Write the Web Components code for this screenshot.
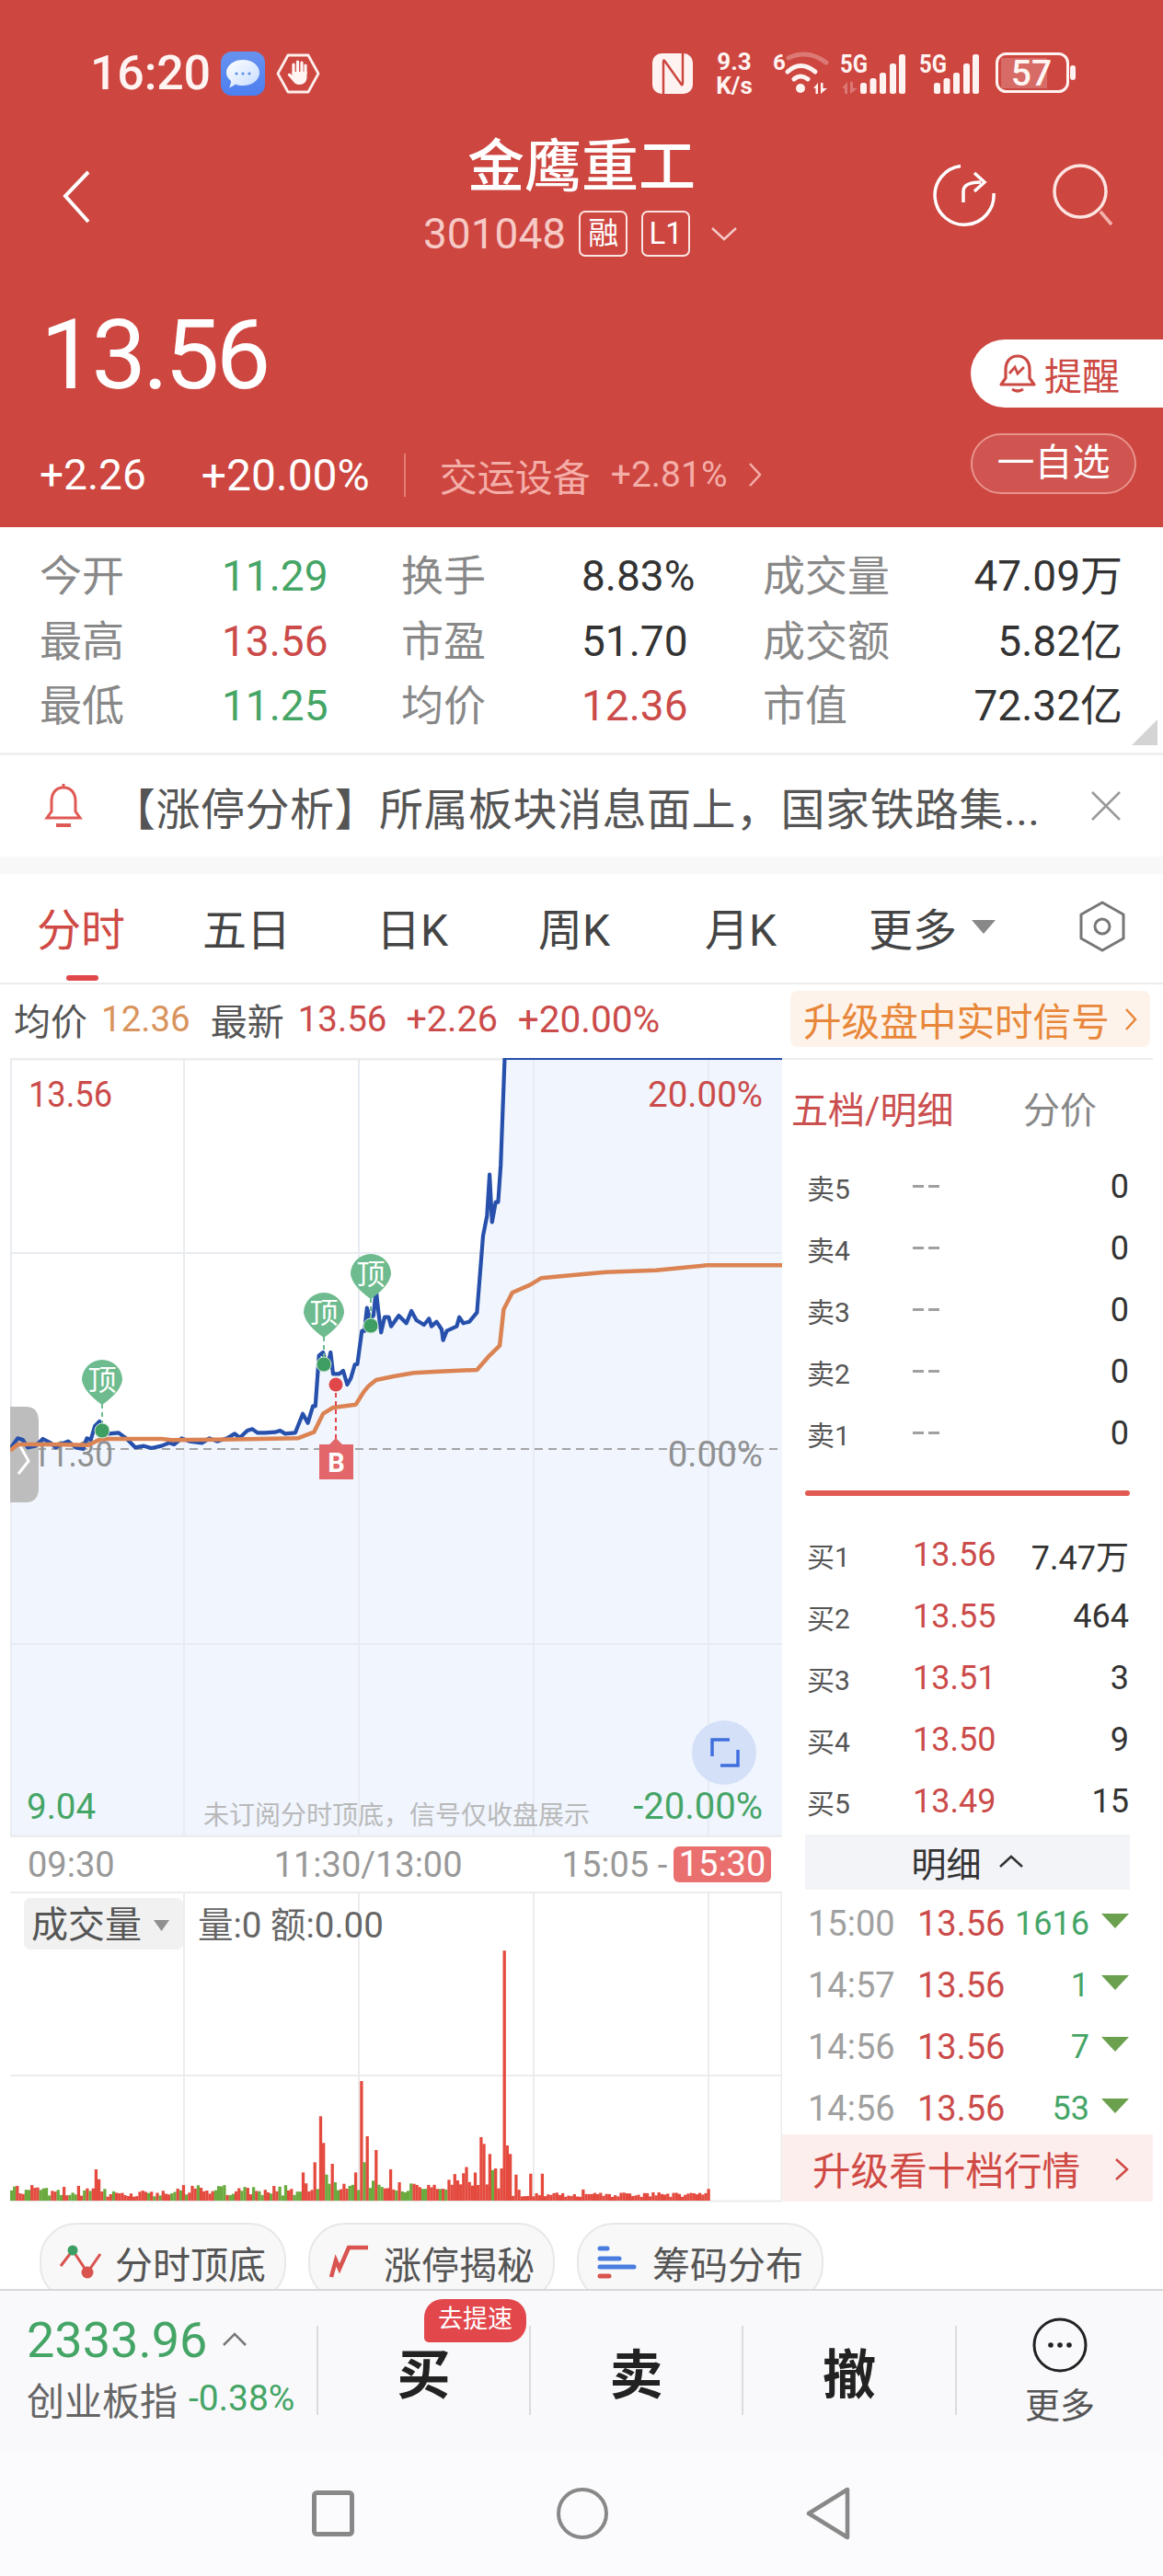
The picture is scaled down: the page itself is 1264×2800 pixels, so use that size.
<!DOCTYPE html>
<html lang="zh">
<head>
<meta charset="utf-8">
<title>金鹰重工</title>
<style>
  html, body { margin: 0; padding: 0; background: #fff; }
  body { width: 1264px; height: 2800px; overflow: hidden; font-family: Roboto, "Noto Sans CJK SC", sans-serif; color: #333; }
</style>
</head>
<body>
<stock-header></stock-header>
<quote-grid></quote-grid>
<news-bar>【涨停分析】所属板块消息面上，国家铁路集...</news-bar>
<chart-tabs></chart-tabs>
<info-row></info-row>
<chart-panel>
  <div slot="left"><time-chart></time-chart><time-axis></time-axis><volume-chart></volume-chart></div>
  <order-book slot="right"></order-book>
</chart-panel>
<chip-row>
  <chip-button>
    <svg slot="icon" width="46" height="38" viewBox="65 2442 46 38"><path d="M66 2465L79 2448L95 2472L109 2452" fill="none" stroke="#d9534f" stroke-width="3"/><circle cx="79" cy="2448" r="5.5" fill="#3d9e63"/><circle cx="95" cy="2472" r="6.5" fill="#d9534f"/></svg>
    分时顶底
  </chip-button>
  <chip-button>
    <svg slot="icon" width="46" height="38" viewBox="360 2442 46 38"><path d="M363 2477L368 2459L372 2468L382 2445H403" fill="none" stroke="#d9534f" stroke-width="4.5"/></svg>
    涨停揭秘
  </chip-button>
  <chip-button>
    <svg slot="icon" width="46" height="38" viewBox="652 2442 46 38"><g fill="none" stroke-width="5" stroke-linecap="round"><path d="M655 2446H663" stroke="#4a7de0"/><path d="M655 2457H676" stroke="#4a7de0"/><path d="M655 2466H692" stroke="#4a7de0"/><path d="M655 2476H665" stroke="#d9534f"/></g></svg>
    筹码分布
  </chip-button>
</chip-row>
<trade-bar></trade-bar>
<nav-keys></nav-keys>

<script>
const BG_RED = '#cd4640';
const RED = '#cb4b4a';
const GREEN = '#45a566';

class StockHeader extends HTMLElement {
  constructor() {
    super();
    this.attachShadow({ mode: 'open' });
    const bars = (x0) => [[0, 12], [10.5, 17], [21, 23], [32, 33], [42, 43]]
      .map(([x, h]) => `<rect x="${x0 + x}" y="${46 - h}" width="7" height="${h}" rx="2.5" fill="#fff3f1"/>`).join('');
    this.shadowRoot.innerHTML = `
      <style>
        :host { display: block; height: 573px; background: ${BG_RED}; color: #fff; overflow: hidden; }
        svg { display: block; flex: none; overflow: visible; }
        .status { display: flex; justify-content: space-between; padding: 55px 94px 0 98px; height: 50px; }
        .left, .right { display: flex; align-items: center; height: 50px; }
        .time { font-size: 52px; font-weight: 500; width: 130px; line-height: 50px; color: #fff4f2; letter-spacing: -.2px; }
        .speed { margin: 0 19px 0 22px; width: 46px; text-align: center; font-weight: 700; color: #fff4f2; }
        .speed div { font-size: 26px; line-height: 26px; }
        .nav { display: grid; grid-template-columns: 1fr 360px 1fr; height: 132px; margin-top: 45px; }
        .back { padding: 35px 0 0 66px; }
        .title { text-align: center; }
        .name { font-size: 62px; line-height: 64px; font-weight: 500; height: 64px; }
        .code { display: flex; justify-content: flex-start; align-items: center; height: 56px; margin-top: 12px; padding-left: 8px; font-size: 46px; color: #f6c9c5; }
        .tag { box-sizing: border-box; width: 53px; height: 50px; line-height: 45px; border: 2px solid #fbe4e1; border-radius: 7px; font-size: 33px; color: #fff; text-align: center; margin-left: 14px; }
        .tag + .tag { margin-left: 15px; }
        .acts { display: flex; padding: 26px 0 0 200px; }
        .quote { display: flex; justify-content: space-between; margin-top: 58px; }
        .price { font-size: 106px; line-height: 92px; height: 92px; padding-left: 44px; letter-spacing: -4px; }
        .chg { display: flex; align-items: center; height: 56px; margin-top: 56px; padding-left: 43px; font-size: 46px; }
        .chg .pct { margin-left: 60px; font-size: 48px; }
        .chg .sep { width: 2px; height: 47px; background: #e47e77; margin: 0 37px 0 37px; }
        .chg .sec { font-size: 41px; color: #f4aea8; width: 186px; }
        .chg .sp { font-size: 39px; color: #f4aea8; width: 149px; }
        .side { width: 209px; padding-top: 29px; }
        .remind { display: flex; align-items: center; height: 74px; background: #fff; border-radius: 37px 0 0 37px; padding-left: 31px; color: #cc4a44; font-size: 41px; box-sizing: border-box; }
        .remind span { margin-left: 9px; }
        .fav { box-sizing: border-box; width: 180px; height: 66px; line-height: 60px; margin-top: 28px; border: 2px solid #ea938d; background: rgba(255,255,255,.08); border-radius: 33px; text-align: center; font-size: 41px; }
      </style>
      <div class="status">
        <div class="left">
          <span class="time">16:20</span>
          <svg width="48" height="48" viewBox="0 0 48 48" style="margin-left:12px">
            <defs><linearGradient id="b" x1="0" y1="0" x2="0" y2="1"><stop offset="0" stop-color="#6792ef"/><stop offset="1" stop-color="#4c7ff0"/></linearGradient>
            <linearGradient id="w" x1="0" y1="0" x2="1" y2="1"><stop offset="0" stop-color="#fff"/><stop offset="1" stop-color="#c6dcff"/></linearGradient></defs>
            <rect width="48" height="48" rx="12" fill="url(#b)"/>
            <path d="M24 9C34 9 42 15 42 23C42 31 34 37 24 37C21 37 18 36.500 16 35.500C14 37 11 39 9 39C10.500 37 11 34 11 32C8 29.500 6 26.500 6 23C6 15 14 9 24 9Z" fill="url(#w)"/>
            <circle cx="17" cy="24" r="1.600" fill="#5f8de8"/><circle cx="24" cy="24" r="1.600" fill="#5f8de8"/><circle cx="31" cy="24" r="1.600" fill="#5f8de8"/>
          </svg>
          <svg width="48" height="44" viewBox="0 0 48 44" style="margin-left:12px">
            <path d="M13 2H35L46 22L35 42H13L2 22Z" fill="none" stroke="#fdeeec" stroke-width="2.800" stroke-linejoin="round"/>
            <g fill="none" stroke="#fff6f4" stroke-width="3.200" stroke-linecap="round"><path d="M19 22V12M23.500 21V9M28 21V10M32 22V13"/></g>
            <path d="M17.500 20H33.500V26C33.500 31 30 34 25.500 34C21 34 19.500 31.500 17.500 29L13 24C12 22.500 14 21 15.500 22L17.500 24Z" fill="#fff6f4"/>
          </svg>
        </div>
        <div class="right">
          <svg width="44" height="44" viewBox="0 0 44 44">
            <rect width="44" height="44" rx="10" fill="#fff3f1"/>
            <path d="M12 44V9Q12 6 14 9L31 33Q33 36 33 32V0" fill="none" stroke="${BG_RED}" stroke-width="2.500"/>
          </svg>
          <div class="speed"><div>9.3</div><div>K/s</div></div>
          <svg width="64" height="48" viewBox="0 0 64 48" style="margin-top:-2px">
            <text x="0" y="21" font-size="24" font-weight="700" fill="#fff3f1">6</text>
            <g fill="none" stroke="#fff3f1" stroke-width="5" stroke-linecap="round">
              <path d="M17 8Q38 -2 58 13" opacity=".3"/>
              <path d="M16 23Q30 10 46 23"/>
              <path d="M23 31Q30 25 38 31"/>
            </g>
            <circle cx="30" cy="41" r="5" fill="#fff3f1"/>
            <path d="M44 41L49 35V47H46.500V41ZM52 35H54.500V41H59L52 47Z" fill="#fff3f1"/>
          </svg>
          <svg width="72" height="48" viewBox="0 0 72 48" style="margin-left:9px">
            <text x="0" y="23" font-size="27" font-weight="700" fill="#fff3f1" textLength="30" lengthAdjust="spacingAndGlyphs">5G</text>
            ${bars(22)}
            <path d="M2 40L8 33V46H5V40ZM11 33H14V40H19L11 46Z" fill="#fff3f1" opacity=".3"/>
          </svg>
          <svg width="68" height="48" viewBox="0 0 68 48" style="margin-left:14px">
            <text x="0" y="23" font-size="27" font-weight="700" fill="#fff3f1" textLength="30" lengthAdjust="spacingAndGlyphs">5G</text>
            ${bars(16)}
          </svg>
          <svg width="88" height="46" viewBox="0 0 88 46" style="margin-left:15px">
            <rect x="1.500" y="1.500" width="77" height="41" rx="10" fill="none" stroke="#fff3f1" stroke-width="3"/>
            <path d="M6 6H56V39H6Z" fill="#fff" opacity=".2"/>
            <rect x="81" y="14" width="6" height="16" rx="3" fill="#fff3f1"/>
            <text x="39" y="36" text-anchor="middle" font-size="39" font-weight="500" fill="#fff6f4">57</text>
          </svg>
        </div>
      </div>
      <div class="nav">
        <div class="back"><svg width="34" height="58" viewBox="0 0 34 58"><path d="M30 2L5 28L30 56" fill="none" stroke="#fff" stroke-width="4"/></svg></div>
        <div class="title">
          <div class="name">金鹰重工</div>
          <div class="code"><span>301048</span><span class="tag">融</span><span class="tag">L1</span>
            <svg width="30" height="16" viewBox="0 0 30 16" style="margin-left:22px"><path d="M2 2L15 14L28 2" fill="none" stroke="#f6c9c5" stroke-width="2.500"/></svg>
          </div>
        </div>
        <div class="acts">
          <svg width="72" height="72" viewBox="0 0 72 72">
            <path d="M32 4.500A32 32 0 1 0 68 34" fill="none" stroke="#fff" stroke-width="3.500"/>
            <path d="M35 44V32Q35 22 54 22" fill="none" stroke="#fff" stroke-width="3.500"/>
            <path d="M47 12L58 22L47 32" fill="none" stroke="#fff" stroke-width="3.500"/>
          </svg>
          <svg width="72" height="72" viewBox="0 0 72 72" style="margin-left:59px">
            <circle cx="31" cy="32" r="28" fill="none" stroke="#fde3e0" stroke-width="3.500"/>
            <path d="M53 54L65 68" stroke="#f4b2ad" stroke-width="3.500"/>
          </svg>
        </div>
      </div>
      <div class="quote">
        <div>
          <div class="price">13.56</div>
          <div class="chg">
            <span>+2.26</span><span class="pct">+20.00%</span><span class="sep"></span>
            <span class="sec">交运设备</span><span class="sp">+2.81%</span>
            <svg width="16" height="28" viewBox="0 0 16 28"><path d="M2 2L13 14L2 26" fill="none" stroke="#f4aea8" stroke-width="2.500"/></svg>
          </div>
        </div>
        <div class="side">
          <div class="remind">
            <svg width="40" height="42" viewBox="0 0 40 42">
              <path d="M20 2C11 2 7 9 7 17V26L2 33H38L33 26V17C33 9 29 2 20 2Z" fill="none" stroke="#cc4a44" stroke-width="3.200" stroke-linejoin="round"/>
              <path d="M11 21L17 14L20 21L27 14" fill="none" stroke="#cc4a44" stroke-width="2.800"/>
              <path d="M14 38Q20 42 26 38" fill="none" stroke="#cc4a44" stroke-width="3.200"/>
            </svg>
            <span>提醒</span>
          </div>
          <div class="fav">一自选</div>
        </div>
      </div>`;
  }
}
customElements.define('stock-header', StockHeader);

class QuoteGrid extends HTMLElement {
  constructor() {
    super();
    this.attachShadow({ mode: 'open' });
    const cells = [
      ['今开', '11.29', 'g'], ['换手', '8.83%', ''], ['成交量', '47.09万', ''],
      ['最高', '13.56', 'r'], ['市盈', '51.70', ''], ['成交额', '5.82亿', ''],
      ['最低', '11.25', 'g'], ['均价', '12.36', 'r'], ['市值', '72.32亿', '']
    ];
    const html = cells.map(([k, v, c], i) =>
      `<span class="k">${k}</span><span class="v ${c} ${i % 3 === 2 ? 'end' : ''}">${v}</span>`).join('');
    this.shadowRoot.innerHTML = `
      <style>
        :host { display: block; position: relative; height: 245px; border-bottom: 3px solid #efefef; }
        .grid { display: grid; grid-template-columns: 198px 195px 196px 197px 150px 1fr; padding: 18px 44px 0 43px; grid-auto-rows: 70.500px; align-items: center; }
        .k { font-size: 46px; color: #888; line-height: 60px; }
        .v { font-size: 46px; color: #333; line-height: 60px; }
        .g { color: ${GREEN}; } .r { color: ${RED}; }
        .end { text-align: right; }
        .corner { position: absolute; right: 6px; bottom: 8px; width: 0; height: 0; border-left: 28px solid transparent; border-bottom: 28px solid #d4d4d4; }
      </style>
      <div class="grid">${html}</div><div class="corner"></div>`;
  }
}
customElements.define('quote-grid', QuoteGrid);

class NewsBar extends HTMLElement {
  constructor() {
    super();
    this.attachShadow({ mode: 'open' });
    this.shadowRoot.innerHTML = `
      <style>
        :host { display: block; border-bottom: 19px solid #f8f8f8; }
        .row { display: flex; align-items: center; height: 110px; padding-left: 48px; font-size: 48px; color: #555; position: relative; }
        .msg { margin-left: 31px; width: 1050px; white-space: nowrap; letter-spacing: .5px; }
        svg { display: block; flex: none; }
        .x { position: absolute; left: 1185px; top: 39px; }
      </style>
      <div class="row">
        <svg width="42" height="50" viewBox="0 0 42 50">
          <path d="M21 5C12 5 8 12 8 20V31L3 38H39L34 31V20C34 12 30 5 21 5Z" fill="none" stroke="#e05a55" stroke-width="3"/>
          <path d="M21 1V5" stroke="#e05a55" stroke-width="3"/>
          <path d="M13 46H29" stroke="#e05a55" stroke-width="4"/>
        </svg>
        <span class="msg"><slot></slot></span>
        <svg class="x" width="34" height="32" viewBox="0 0 34 32"><path d="M2 1L32 31M32 1L2 31" stroke="#999" stroke-width="2.500"/></svg>
      </div>`;
  }
}
customElements.define('news-bar', NewsBar);

class ChartTabs extends HTMLElement {
  constructor() {
    super();
    this.attachShadow({ mode: 'open' });
    const tabs = [['分时', 180], ['五日', 189], ['日K', 176], ['周K', 181], ['月K', 178]];
    this.shadowRoot.innerHTML = `
      <style>
        :host { display: block; height: 118px; border-bottom: 2px solid #ececec; font-size: 48px; color: #444; }
        .row { display: flex; align-items: center; height: 118px; padding: 0 0 4px 40px; box-sizing: border-box; position: relative; }
        .on { color: #cf4a44; }
        .ind { position: absolute; left: 72px; top: 110px; width: 35px; height: 6px; border-radius: 3px; background: #e0474a; }
        .tri { width: 0; height: 0; border: 13px solid transparent; border-top: 15px solid #888; border-bottom: 0; margin-left: 16px; }
        svg { margin-left: 90px; }
      </style>
      <div class="row">
        ${tabs.map(([t, w], i) => `<span class="${i ? '' : 'on'}" style="width:${w}px">${t}</span>`).join('')}
        <span>更多</span><span class="tri"></span>
        <svg width="52" height="56" viewBox="0 0 52 56"><path d="M26 2L49 15V41L26 54L3 41V15Z" fill="none" stroke="#777" stroke-width="3" stroke-linejoin="round"/><circle cx="26" cy="28" r="8" fill="none" stroke="#777" stroke-width="3"/></svg>
        <span class="ind"></span>
      </div>`;
  }
}
customElements.define('chart-tabs', ChartTabs);

class InfoRow extends HTMLElement {
  constructor() {
    super();
    this.attachShadow({ mode: 'open' });
    this.shadowRoot.innerHTML = `
      <style>
        :host { display: block; height: 80px; }
        .row { display: flex; align-items: center; height: 78px; padding: 0 0 3px 15px; box-sizing: border-box; font-size: 38.500px; color: ${RED}; }
        .k { font-size: 40px; color: #555; }
        .o { color: #d9935c; }
        .pill { display: flex; align-items: center; margin-left: auto; margin-right: 14px; width: 391px; height: 61px; box-sizing: border-box; padding-left: 14px; background: #fdf3ea; border-radius: 8px; color: #e8873a; font-size: 41.600px; }
        .pill svg { margin-left: 16px; }
      </style>
      <div class="row">
        <span class="k">均价</span><span class="o" style="margin-left:15px">12.36</span>
        <span class="k" style="margin-left:22px">最新</span><span style="margin-left:15px">13.56</span>
        <span style="margin-left:21px;font-size:39.500px">+2.26</span><span style="margin-left:22px;font-size:40.500px">+20.00%</span>
        <span class="pill">升级盘中实时信号<svg width="14" height="26" viewBox="0 0 14 26"><path d="M2 2L12 13L2 24" fill="none" stroke="#e8873a" stroke-width="2.500"/></svg></span>
      </div>`;
  }
}
customElements.define('info-row', InfoRow);

class ChartPanel extends HTMLElement {
  constructor() {
    super();
    this.attachShadow({ mode: 'open' });
    this.shadowRoot.innerHTML = `
      <style>
        :host { display: grid; grid-template-columns: 850px 403px; height: 1244px; }
      </style>
      <slot name="left"></slot><slot name="right"></slot>`;
  }
}
customElements.define('chart-panel', ChartPanel);

// coordinates below were read off the zoomed crop: x is scaled 1.823, y is 3x with offset 1140
const zx = (x) => +(x / 1.823).toFixed(1);
const zy = (y) => y / 3 + 1140;
const toLine = (pts) => pts.map(([x, y]) => `${zx(x)},${zy(y)}`).join(' ');

const PRICE = [[20,1305],[35,1270],[45,1275],[55,1300],[70,1295],[85,1272],[100,1285],[110,1300],[120,1290],[135,1280],[150,1300],[165,1305],[172,1270],[180,1275],[188,1230],[197,1215],[205,1250],[215,1255],[235,1252],[250,1270],[268,1300],[285,1295],[300,1302],[320,1295],[335,1285],[345,1290],[360,1270],[375,1280],[400,1285],[415,1270],[430,1280],[450,1270],[465,1255],[475,1268],[490,1245],[500,1240],[510,1252],[525,1252],[545,1250],[555,1245],[565,1255],[585,1252],[600,1190],[610,1220],[620,1165],[625,1165],[632,1000],[640,990],[648,1040],[655,990],[660,1060],[672,1060],[680,1050],[688,1095],[695,1075],[703,1030],[708,1028],[717,920],[722,920],[727,845],[733,880],[740,870],[745,785],[750,860],[755,925],[762,875],[770,875],[775,905],[790,870],[805,895],[815,855],[825,885],[840,900],[850,880],[855,905],[865,890],[875,915],[878,950],[885,920],[905,905],[910,875],[918,895],[930,890],[945,860],[957,610],[965,545],[970,410],[975,565],[982,500],[987,500],[992,380],[1000,30],[1550,30]];
const AVG = [[20,1310],[35,1290],[100,1290],[175,1292],[200,1272],[320,1272],[340,1276],[490,1273],[590,1270],[622,1250],[640,1190],[660,1170],[705,1160],[720,1120],[730,1100],[745,1080],[780,1068],[820,1057],[870,1052],[945,1047],[970,1000],[990,968],[998,850],[1015,795],[1050,770],[1072,748],[1120,740],[1200,728],[1300,722],[1400,706],[1550,706]];
const GRID_X = [200, 390, 580, 770];

class TimeChart extends HTMLElement {
  constructor() {
    super();
    this.attachShadow({ mode: 'open' });
    const pin = (cx, cy, dy) => `
      <path d="M${cx} ${cy + 26}V${dy}" stroke="#6dbb8e" stroke-width="2" stroke-dasharray="5 4"/>
      <path d="M${cx - 22} ${cy}A22 22 0 1 1 ${cx + 22} ${cy}Q${cx + 20} ${cy + 13} ${cx} ${cy + 27}Q${cx - 20} ${cy + 13} ${cx - 22} ${cy}Z" fill="#6dbb8e"/>
      <text x="${cx}" y="${cy + 11}" text-anchor="middle" font-size="31" fill="#fff">顶</text>
      <circle cx="${cx}" cy="${dy}" r="8" fill="#3f9e62" stroke="#cfe6d8" stroke-width="1"/>`;
    this.shadowRoot.innerHTML = `
      <style>
        :host { display: block; padding-left: 11px; height: 847px; }
        svg { display: block; }
      </style>
      <svg width="839" height="847" viewBox="11 1150 839 847">
        <rect x="11" y="1150" width="839" height="847" fill="#fff"/>
        <polygon points="${toLine(PRICE)} 850,1997 11,1997" fill="#f0f5fe"/>
        <g stroke="#e8ebf1" stroke-width="2" fill="none">
          ${GRID_X.map((x) => `<path d="M${x} 1150V1997"/>`).join('')}
          <path d="M11 1362H850M11 1787H850"/>
          <path d="M12 1150V1997" stroke-width="2"/>
          <path d="M11 1151H850" stroke="#ececec" stroke-width="3"/>
          <path d="M11 1996H850" stroke="#ececec" stroke-width="3"/>
        </g>
        <path d="M11 1575H850" stroke="#a4a4a4" stroke-width="2" stroke-dasharray="9 6"/>
        <path d="M11 1529H28Q42 1529 42 1545V1617Q42 1633 28 1633H11Z" fill="#bdbdbd"/>
        <path d="M22 1572L31 1588L20 1602" fill="none" stroke="#fff" stroke-width="3"/>
        <g font-size="38.500">
          <text x="31" y="1203" fill="${RED}" textLength="91" lengthAdjust="spacingAndGlyphs">13.56</text>
          <text x="829" y="1203" text-anchor="end" fill="${RED}">20.00%</text>
          <text x="35" y="1594" fill="#8f9092" textLength="88" lengthAdjust="spacingAndGlyphs">11.30</text>
          <text x="829" y="1594" text-anchor="end" fill="#8f9092">0.00%</text>
          <text x="29" y="1977" fill="${GREEN}">9.04</text>
          <text x="829" y="1977" text-anchor="end" fill="${GREEN}" font-size="40">-20.00%</text>
        </g>
        <text x="221" y="1983" font-size="28" fill="#b9b9b9">未订阅分时顶底，信号仅收盘展示</text>
        <polyline points="${toLine(PRICE)}" fill="none" stroke="#2650ab" stroke-width="4.200" stroke-linejoin="round"/>
        <polyline points="${toLine(AVG)}" fill="none" stroke="#db8353" stroke-width="4.500" stroke-linejoin="round"/>
        ${pin(111, 1500, 1555)}
        ${pin(352, 1427, 1483)}
        ${pin(403, 1385, 1441)}
        <path d="M365 1505V1570" stroke="#e0474a" stroke-width="2" stroke-dasharray="5 4"/>
        <circle cx="365" cy="1505" r="7.500" fill="#e0474a"/>
        <path d="M365 1563L372 1570H384V1608H347V1570H358Z" fill="#e2666a"/>
        <text x="365.500" y="1600" text-anchor="middle" font-size="29" font-weight="700" fill="#fff">B</text>
        <circle cx="787" cy="1905" r="35" fill="#d4e0f8"/>
        <path d="M774 1909V1891H793M802 1902V1919H783" fill="none" stroke="#3f6fdd" stroke-width="3.500"/>
      </svg>`;
  }
}
customElements.define('time-chart', TimeChart);

class TimeAxis extends HTMLElement {
  constructor() {
    super();
    this.attachShadow({ mode: 'open' });
    this.shadowRoot.innerHTML = `
      <style>
        :host { display: block; height: 59px; font-size: 38px; color: #999; }
        .row { display: flex; align-items: center; height: 59px; padding: 0 12px 0 30px; box-sizing: border-box; }
        .close { margin-left: auto; width: 106px; height: 39px; line-height: 39px; text-align: center; color: #fff; background: #ea7070; border-radius: 6px; }
      </style>
      <div class="row"><span>09:30</span><span style="margin-left:173px">11:30/13:00</span><span style="margin-left:108px">15:05 -</span><span class="close">15:30</span></div>`;
  }
}
customElements.define('time-axis', TimeAxis);

class VolumeChart extends HTMLElement {
  constructor() {
    super();
    this.attachShadow({ mode: 'open' });
    this.shadowRoot.innerHTML = `
      <style>
        :host { display: block; padding-left: 11px; height: 338px; }
        svg { display: block; }
      </style>
      <svg width="839" height="338" viewBox="11 2056 839 338">
        <g stroke="#ececec" stroke-width="2" fill="none">
          <path d="M11 2057H850M11 2256H850M11 2392.500H850" />
          ${GRID_X.map((x) => `<path d="M${x} 2056V2393"/>`).join('')}
          <path d="M849.500 2056V2393"/>
        </g>
        <rect x="26" y="2063" width="173" height="56" rx="7" fill="#f1f1f1"/>
        <text x="34" y="2106" font-size="40" fill="#555">成交量</text>
        <path d="M167 2087H184L175.500 2099Z" fill="#8f8f8f"/>
        <text x="215" y="2106" font-size="38.500" fill="#666">量:0 额:0.00</text>
        ${this.bars()}
      </svg>`;
  }

  bars() {
    const STEP = 3.17;
    const BASE = 2392;
    let seed = 17;
    const rnd = () => { seed = (seed * 1103515245 + 12345) & 0x7fffffff; return seed / 0x7fffffff; };
    const list = [];
    for (let i = 0; i < 240; i++) {
      let h = 3 + rnd() * 6;
      let green = false;
      if (i < 30) { h = 5 + rnd() * 12; green = rnd() < .4; }
      else if (i < 55) { h = 4 + rnd() * 7; green = rnd() < .3; }
      else if (i < 100) { h = 5 + rnd() * 12; green = rnd() < .45; }
      else if (i < 150) { h = 9 + rnd() * 10; green = rnd() < .55; }
      else if (i < 166) { h = 16 + rnd() * 24; }
      else { h = 4 + rnd() * 5; if (rnd() < .08) h += 5; }
      list.push({ h, c: green ? '#6aaa3e' : '#e44a3e' });
    }
    const red = [[33,1012],[187,958],[195,990],[172,1020],[597,968],[620,935],[630,785],[636,872],[654,940],[677,1005],[700,968],[711,960],[716,670],[727,850],[745,895],[769,958],[790,1000],[815,1005],[951,853],[958,875],[970,908],[980,955],[990,955],[998,245],[1005,880],[1011,908],[1020,975],[1050,972],[1071,972],[1400,1022]];
    const green = [[75,1025],[85,1020],[113,1025],[150,1040],[205,1022],[292,1035],[640,928],[647,975],[663,1000],[690,1012],[720,935],[737,995],[750,1008],[805,1028],[868,1022],[975,960]];
    const put = (arr, c) => arr.forEach(([x, y]) => {
      const i = Math.round((x / 1.823 - 11) / STEP);
      list[i] = { h: (1060 - y) / 3, c };
    });
    put(green, '#6aaa3e');
    put(red, '#e44a3e');
    return list.map((b, i) => {
      const x = +(11 + i * STEP + 1.5).toFixed(1);
      return `<path d="M${x} ${BASE}V${(BASE - b.h).toFixed(1)}" stroke="${b.c}" stroke-width="3.300"/>`;
    }).join('');
  }
}
customElements.define('volume-chart', VolumeChart);

class OrderBook extends HTMLElement {
  constructor() {
    super();
    this.attachShadow({ mode: 'open' });
    const sells = [5, 4, 3, 2, 1].map((n) => `<div class="row"><span class="k">卖${n}</span><span class="dash"><i></i><i></i></span><span class="q">0</span></div>`).join('');
    const buys = [['1', '13.56', '7.47万'], ['2', '13.55', '464'], ['3', '13.51', '3'], ['4', '13.50', '9'], ['5', '13.49', '15']]
      .map(([n, p, q]) => `<div class="row"><span class="k">买${n}</span><span class="p">${p}</span><span class="q">${q}</span></div>`).join('');
    const ticks = [['15:00', '1616'], ['14:57', '1'], ['14:56', '7'], ['14:56', '53']]
      .map(([t, q]) => `<div class="tick"><span class="t">${t}</span><span class="p">13.56</span><span class="n">${q}</span><i></i></div>`).join('');
    this.shadowRoot.innerHTML = `
      <style>
        :host { display: block; height: 1244px; position: relative; }
        .head { display: flex; align-items: center; height: 104px; border-top: 2px solid #ececec; padding-left: 10px; font-size: 40px; color: #888; }
        .head b { font-weight: 400; color: #cb4f4f; width: 252px; }
        .row { display: grid; grid-template-columns: 115px 1fr auto; align-items: center; height: 67px; padding: 0 26px 0 27px; font-size: 36px; }
        .k { font-size: 30px; color: #555; }
        .dash { display: flex; gap: 5px; }
        .dash i { width: 12px; height: 3px; background: #a0a0a0; }
        .p { color: ${RED}; }
        .q { color: #333; text-align: right; }
        .rule { height: 6px; border-radius: 3px; background: #e05a52; margin: 28.500px 25px 30.500px 25px; }
        .more { display: flex; align-items: center; justify-content: center; height: 60px; margin: 2.500px 25px 3.500px 25px; background: #f3f4f8; font-size: 38px; color: #333; }
        .more svg { margin-left: 18px; }
        .ticks { height: 263px; overflow: hidden; }
        .tick { display: flex; align-items: center; height: 67px; padding-left: 28px; font-size: 38px; position: relative; }
        .t { color: #a0a0a0; width: 119px; }
        .n { position: absolute; right: 69px; color: ${GREEN}; }
        .tick .n { font-size: 36px; }
        .tick i { position: absolute; right: 26px; top: 23px; width: 0; height: 0; border: 15px solid transparent; border-top: 16px solid #6ba14e; border-bottom: 0; }
        .up { display: flex; align-items: center; height: 73px; padding-left: 33px; background: #fdeeee; color: #cf4a44; font-size: 41.600px; position: relative; }
        .up svg { position: absolute; left: 361px; top: 25px; }
      </style>
      <div class="head"><b>五档/明细</b><span>分价</span></div>
      ${sells}
      <div class="rule"></div>
      ${buys}
      <div class="more">明细<svg width="28" height="15" viewBox="0 0 28 15"><path d="M2 13L14 2L26 13" fill="none" stroke="#333" stroke-width="2.500"/></svg></div>
      <div class="ticks">${ticks}</div>
      <div class="up">升级看十档行情<svg width="16" height="26" viewBox="0 0 16 26"><path d="M2 2L14 13L2 24" fill="none" stroke="#cf4a44" stroke-width="2.500"/></svg></div>`;
  }
}
customElements.define('order-book', OrderBook);

class ChipRow extends HTMLElement {
  constructor() {
    super();
    this.attachShadow({ mode: 'open' });
    this.shadowRoot.innerHTML = `
      <style>
        :host { display: flex; gap: 24px; height: 72px; padding: 22px 0 0 43px; overflow: hidden; }
      </style>
      <slot></slot>`;
  }
}
customElements.define('chip-row', ChipRow);

class ChipButton extends HTMLElement {
  constructor() {
    super();
    this.attachShadow({ mode: 'open' });
    this.shadowRoot.innerHTML = `
      <style>
        :host { display: flex; flex: none; align-items: center; box-sizing: border-box; width: 268px; height: 86px; padding-left: 20px; border: 2px solid #e8e8e8; border-radius: 40px; background: #f8f8f8; font-size: 41px; color: #555; }
        ::slotted(svg) { display: block; margin-right: 14px; flex: none; }
      </style>
      <slot name="icon"></slot><slot></slot>`;
  }
}
customElements.define('chip-button', ChipButton);

class TradeBar extends HTMLElement {
  constructor() {
    super();
    this.attachShadow({ mode: 'open' });
    this.shadowRoot.innerHTML = `
      <style>
        :host { display: grid; grid-template-columns: 344px 231px 231px 232px 1fr; height: 174px; border-top: 2px solid #d8d8d8; background: #f9f9fb; align-items: start; }
        .idx { padding: 25px 0 0 29px; }
        .val { display: flex; align-items: center; height: 56px; font-size: 54px; color: ${GREEN}; }
        .val svg { margin-left: 16px; }
        .sub { display: flex; align-items: center; height: 50px; margin-top: 11px; font-size: 41px; color: #666; white-space: nowrap; }
        .sub span { font-size: 39px; color: ${GREEN}; margin-left: 12px; }
        .cell { display: flex; align-items: center; justify-content: center; position: relative; height: 97px; margin-top: 38px; border-left: 2px solid #dcdcdc; box-sizing: border-box; font-size: 58px; font-weight: 700; color: #222; }
        .badge { position: absolute; left: 115px; top: -29px; width: 111px; height: 47px; line-height: 45px; text-align: center; background: #e2474c; border-radius: 20px 20px 20px 5px; font-size: 27px; font-weight: 400; color: #fff; }
        .more { flex-direction: column; justify-content: flex-start; font-size: 38px; font-weight: 400; color: #555; }
        .more svg { display: block; flex: none; margin-top: -9px; }
        .more span { line-height: 44px; margin-top: 14px; }
      </style>
      <div class="idx">
        <div class="val">2333.96<svg width="28" height="16" viewBox="0 0 28 16"><path d="M2 14L14 2L26 14" fill="none" stroke="#777" stroke-width="2.500"/></svg></div>
        <div class="sub">创业板指<span>-0.38%</span></div>
      </div>
      <div class="cell">买<span class="badge">去提速</span></div>
      <div class="cell">卖</div>
      <div class="cell">撤</div>
      <div class="cell more">
        <svg width="60" height="60" viewBox="0 0 60 60"><circle cx="30" cy="30" r="28" fill="none" stroke="#222" stroke-width="3"/><circle cx="20" cy="30" r="2.800" fill="#222"/><circle cx="30" cy="30" r="2.800" fill="#222"/><circle cx="40" cy="30" r="2.800" fill="#222"/></svg>
        <span>更多</span>
      </div>`;
  }
}
customElements.define('trade-bar', TradeBar);

class NavKeys extends HTMLElement {
  constructor() {
    super();
    this.attachShadow({ mode: 'open' });
    this.shadowRoot.innerHTML = `
      <style>
        :host { display: flex; align-items: center; height: 136px; padding-left: 339px; background: #fbfbfd; }
        svg { display: block; flex: none; }
      </style>
      <svg width="46" height="50" viewBox="0 0 46 50"><rect x="2.500" y="2.500" width="41" height="45" rx="3" fill="none" stroke="#888" stroke-width="5"/></svg>
      <svg width="56" height="58" viewBox="0 0 56 58" style="margin-left:220px"><circle cx="28" cy="29" r="26" fill="none" stroke="#888" stroke-width="4"/></svg>
      <svg width="50" height="58" viewBox="0 0 50 58" style="margin-left:214px"><path d="M46 3V55L4 29Z" fill="none" stroke="#888" stroke-width="4.500" stroke-linejoin="round"/></svg>`;
  }
}
customElements.define('nav-keys', NavKeys);
</script>
</body>
</html>
